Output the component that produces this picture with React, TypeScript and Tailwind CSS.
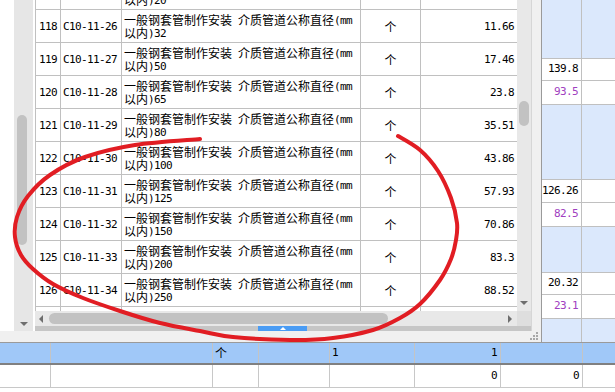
import React from "react";

const MONO = "font-['DejaVu_Sans_Mono'] text-[11px] tracking-[-0.62px] whitespace-pre";
const CJK = "font-['Noto_Sans_CJK_SC'] text-[12px]";

function Mixed({ s, shift }: { s: string; shift?: boolean }) {
  const parts = s.match(/[\x20-\x7e]+|[^\x20-\x7e]+/g) ?? [];
  return (
    <>
      {parts.map((p, i) =>
        /^[\x20-\x7e]/.test(p) ? (
          <span key={i} className={`${MONO} ${shift ? "translate-y-[1px]" : ""}`}>
            {p}
          </span>
        ) : (
          <span key={i} className={CJK}>
            {p}
          </span>
        )
      )}
    </>
  );
}

const rows = [
  { n: 117, code: "C10-11-25", d: "20", amt: "8.74" },
  { n: 118, code: "C10-11-26", d: "32", amt: "11.66" },
  { n: 119, code: "C10-11-27", d: "50", amt: "17.46" },
  { n: 120, code: "C10-11-28", d: "65", amt: "23.8" },
  { n: 121, code: "C10-11-29", d: "80", amt: "35.51" },
  { n: 122, code: "C10-11-30", d: "100", amt: "43.86" },
  { n: 123, code: "C10-11-31", d: "125", amt: "57.93" },
  { n: 124, code: "C10-11-32", d: "150", amt: "70.86" },
  { n: 125, code: "C10-11-33", d: "200", amt: "83.3" },
  { n: 126, code: "C10-11-34", d: "250", amt: "88.52" },
  { n: 127, code: "C10-11-35", d: "300", amt: "104.5" },
];

type Block = { h: number; text?: string; purple?: boolean; last?: boolean };
const rightBlocks: Block[] = [
  { h: 59 },
  { h: 22, text: "139.8" },
  { h: 24, text: "93.5", purple: true },
  { h: 75 },
  { h: 23, text: "126.26" },
  { h: 24, text: "82.5", purple: true },
  { h: 46 },
  { h: 22, text: "20.32" },
  { h: 24, text: "23.1", purple: true },
  { h: 23, last: true },
];

const pts: number[][] = [
  [200, 139], [135, 145], [85, 157], [50, 175], [28, 196], [17, 217], [15, 237],
  [21, 255], [33, 269], [53, 284], [83, 298], [120, 311], [160, 323], [200, 331],
  [233, 337], [290, 340], [333, 338], [373, 330], [400, 318], [420, 304], [440, 280],
  [451, 259], [456, 240], [457, 223], [451, 198], [438, 171], [420, 150], [398, 136],
];

function crPath(p: number[][]) {
  let d = `M${p[0][0]},${p[0][1]}`;
  for (let i = 0; i < p.length - 1; i++) {
    const p0 = p[i - 1] || p[i];
    const p1 = p[i];
    const p2 = p[i + 1];
    const p3 = p[i + 2] || p2;
    const c1x = p1[0] + (p2[0] - p0[0]) / 6;
    const c1y = p1[1] + (p2[1] - p0[1]) / 6;
    const c2x = p2[0] - (p3[0] - p1[0]) / 6;
    const c2y = p2[1] - (p3[1] - p1[1]) / 6;
    d += ` C${c1x.toFixed(1)},${c1y.toFixed(1)} ${c2x.toFixed(1)},${c2y.toFixed(1)} ${p2[0]},${p2[1]}`;
  }
  return d;
}

function Row({ r }: { r: (typeof rows)[number] }) {
  return (
    <div className="flex h-[33px] shrink-0 border-b border-[#c0c0c0] leading-[13px] text-black">
      <div className="w-[25px] shrink-0 border-r border-[#c0c0c0] flex items-center justify-center">
        <Mixed s={String(r.n)} />
      </div>
      <div className="w-[61px] shrink-0 border-r border-[#c0c0c0] flex items-center pl-[2px]">
        <Mixed s={r.code} />
      </div>
      <div className="w-[239px] shrink-0 border-r border-[#c0c0c0] pt-[3px] pl-[2px] overflow-hidden">
        <div className="h-[13px] whitespace-nowrap flex items-center">
          <Mixed s="一般钢套管制作安装 介质管道公称直径(mm" shift />
        </div>
        <div className="h-[13px] whitespace-nowrap flex items-center">
          <Mixed s={`以内)${r.d}`} shift />
        </div>
      </div>
      <div className="w-[60px] shrink-0 border-r border-[#c0c0c0] flex items-center justify-center">
        <Mixed s="个" />
      </div>
      <div className="w-[96px] shrink-0 flex items-center justify-end pr-[3px]">
        <Mixed s={r.amt} />
      </div>
    </div>
  );
}

export default function App() {
  return (
    <div className="relative w-[615px] h-[392px] overflow-hidden bg-white flex flex-col select-none">
      {/* top section */}
      <div className="flex h-[343px] shrink-0 border-b border-[#9a9a9a]">
        {/* floating panel */}
        <div className="w-[542px] shrink-0 flex flex-col border-r border-[#9a9a9a] bg-[#f0f0f0]">
          <div className="flex h-[331px] shrink-0">
            <div className="w-[14px] shrink-0 bg-white" />
            {/* left scrollbar */}
            <div className="w-[19px] shrink-0 bg-[#e6e6e6] flex flex-col">
              <div className="h-[115px] shrink-0" />
              <div className="ml-[3px] w-[10px] h-[130px] rounded-[5px] bg-[#c2c2c2]" />
              <div className="flex-1" />
              <div className="flex justify-center pb-[5px]">
                <div className="w-0 h-0 border-l-[4px] border-r-[4px] border-t-[4px] border-l-transparent border-r-transparent border-t-[#6e6e6e]" />
              </div>
            </div>
            <div className="w-[2px] shrink-0 bg-white" />
            {/* main grid area */}
            <div className="w-[496px] shrink-0 flex flex-col">
              <div className="flex h-[311px] shrink-0">
                <div className="w-[482px] shrink-0 bg-white border-l border-[#c0c0c0] overflow-hidden flex flex-col">
                  <div className="mt-[-23px] flex flex-col">
                    {rows.map((r) => (
                      <Row key={r.n} r={r} />
                    ))}
                  </div>
                </div>
                {/* vertical scrollbar */}
                <div className="w-[14px] shrink-0 bg-[#e8e8e8] flex flex-col">
                  <div className="h-[101px] shrink-0" />
                  <div className="ml-[2px] w-[10px] h-[25px] rounded-[5px] bg-[#c2c2c2]" />
                  <div className="flex-1" />
                  <div className="flex justify-center pb-[6px]">
                    <div className="w-0 h-0 border-l-[4px] border-r-[4px] border-t-[4px] border-l-transparent border-r-transparent border-t-[#6e6e6e]" />
                  </div>
                </div>
              </div>
              {/* horizontal scrollbar */}
              <div className="flex h-[15px] shrink-0">
                <div className="w-[482px] shrink-0 bg-[#e8e8e8] flex items-center">
                  <div className="w-[4px] shrink-0" />
                  <div className="w-0 h-0 border-t-[4px] border-b-[4px] border-r-[4px] border-t-transparent border-b-transparent border-r-[#6e6e6e]" />
                  <div className="w-[6px] shrink-0" />
                  <div className="w-[339px] h-[11px] rounded-[6px] bg-[#c2c2c2]" />
                  <div className="flex-1" />
                  <div className="w-0 h-0 border-t-[4px] border-b-[4px] border-l-[4px] border-t-transparent border-b-transparent border-l-[#6e6e6e]" />
                  <div className="w-[5px] shrink-0" />
                </div>
                <div className="w-[14px] shrink-0 bg-[#dedede]" />
              </div>
              <div className="h-[5px] shrink-0 bg-[#c6c6c6] flex">
                <div className="w-[223px] shrink-0" />
                <div className="w-[49px] shrink-0 bg-[#4a9cf4] flex items-center justify-center">
                  <div className="w-0 h-0 border-l-[3px] border-r-[3px] border-b-[3px] border-l-transparent border-r-transparent border-b-white" />
                </div>
              </div>
            </div>
            {/* right frame */}
            <div className="w-[10px] shrink-0 bg-[#f0f0f0] border-l border-[#d6d6d6]" />
          </div>
          {/* bottom frame */}
          <div className="flex-1 flex justify-end items-end pr-[2px] pb-[1px]">
            <svg width="9" height="9" viewBox="0 0 9 9">
              <rect x="6" y="0" width="2" height="2" fill="#a8a8a8" />
              <rect x="3" y="3" width="2" height="2" fill="#a8a8a8" />
              <rect x="6" y="3" width="2" height="2" fill="#a8a8a8" />
              <rect x="0" y="6" width="2" height="2" fill="#a8a8a8" />
              <rect x="3" y="6" width="2" height="2" fill="#a8a8a8" />
              <rect x="6" y="6" width="2" height="2" fill="#a8a8a8" />
            </svg>
          </div>
        </div>
        {/* right panel behind */}
        <div className="flex-1 flex flex-col">
          {rightBlocks.map((b, i) => (
            <div
              key={i}
              className={`flex shrink-0 ${b.last ? "" : "border-b border-[#c0c0c0]"} ${b.text ? "bg-white" : "bg-[#dbe8fc]"}`}
              style={{ height: b.h }}
            >
              <div
                className={`w-[40px] shrink-0 border-r border-[#c0c0c0] flex items-center justify-end pr-[3px] ${b.purple ? "text-[#a040c0]" : "text-black"}`}
              >
                {b.text ? <Mixed s={b.text} /> : null}
              </div>
              <div className="flex-1" />
            </div>
          ))}
        </div>
      </div>
      {/* bottom table */}
      <div className="flex h-[22px] shrink-0 bg-[#a0c8f8] border-b-2 border-[#808080] text-black">
        <div className="w-[51px] shrink-0 border-r border-[#c4c4c4]" />
        <div className="w-[162px] shrink-0 border-r border-[#c4c4c4]" />
        <div className="w-[46px] shrink-0 border-r border-[#c4c4c4] flex items-center pl-[2px]">
          <Mixed s="个" />
        </div>
        <div className="w-[71px] shrink-0 border-r border-[#c4c4c4]" />
        <div className="w-[85px] shrink-0 border-r border-[#c4c4c4] flex items-center pl-[2px]">
          <Mixed s="1" />
        </div>
        <div className="w-[86px] shrink-0 border-r border-[#c4c4c4] flex items-center justify-end pr-[3px]">
          <Mixed s="1" />
        </div>
        <div className="w-[82px] shrink-0 border-r border-[#c4c4c4]" />
        <div className="flex-1" />
      </div>
      <div className="flex h-[23px] shrink-0 bg-white border-b border-[#c8c8c8] text-black">
        <div className="w-[51px] shrink-0 border-r border-[#c8c8c8]" />
        <div className="w-[162px] shrink-0 border-r border-[#c8c8c8]" />
        <div className="w-[46px] shrink-0 border-r border-[#c8c8c8]" />
        <div className="w-[71px] shrink-0 border-r border-[#c8c8c8]" />
        <div className="w-[85px] shrink-0 border-r border-[#c8c8c8]" />
        <div className="w-[86px] shrink-0 border-r border-[#c8c8c8] flex items-center justify-end pr-[3px]">
          <Mixed s="0" />
        </div>
        <div className="w-[82px] shrink-0 border-r border-[#c8c8c8] flex items-center justify-end pr-[3px]">
          <Mixed s="0" />
        </div>
        <div className="flex-1" />
      </div>
      <div className="flex-1 bg-white" />
      {/* red annotation */}
      <svg
        className="absolute inset-0 pointer-events-none"
        width="615"
        height="392"
        viewBox="0 0 615 392"
      >
        <path d={crPath(pts)} fill="none" stroke="#e11d23" strokeWidth="4" strokeLinecap="round" strokeLinejoin="round" />
      </svg>
    </div>
  );
}
